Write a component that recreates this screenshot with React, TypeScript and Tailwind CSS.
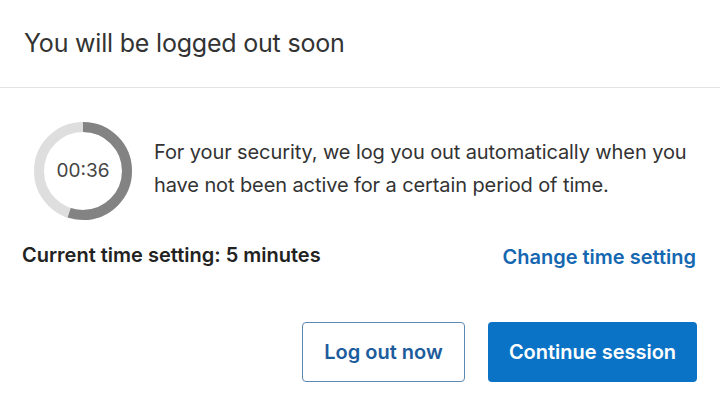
import React from "react";

const FONT = { fontFamily: "Inter, 'Noto Sans', sans-serif" };

function Countdown({ label, fraction }: { label: string; fraction: number }) {
  const r = 44;
  const c = 2 * Math.PI * r;
  return (
    <div className="relative w-[98px] h-[98px] shrink-0">
      <svg width="98" height="98" viewBox="0 0 98 98" className="-rotate-90">
        <circle cx="49" cy="49" r={r} fill="none" stroke="#dedede" strokeWidth="10" />
        <circle
          cx="49"
          cy="49"
          r={r}
          fill="none"
          stroke="#838383"
          strokeWidth="10"
          strokeDasharray={`${c * fraction} ${c}`}
        />
      </svg>
      <div className="absolute inset-0 flex items-center justify-center text-[19px] text-[#444]">{label}</div>
    </div>
  );
}

export default function App() {
  return (
    <div className="w-[720px] h-[406px] bg-white overflow-hidden" style={FONT}>
      <div className="h-[88px] border-b border-[#e3e3e3] flex items-center px-6">
        <h1 className="text-[25px] text-[#333] tracking-[-0.2px]">You will be logged out soon</h1>
      </div>

      <div className="px-[22px] pt-[34px]">
        <div className="flex items-center gap-[22px] pl-3">
          <Countdown label="00:36" fraction={0.55} />
          <p className="text-[20px] leading-[33px] text-[#333] -mt-1 tracking-[-0.1px]">
            For your security, we log you out automatically when you
            <br />
            have not been active for a certain period of time.
          </p>
        </div>

        <div className="flex items-center justify-between mt-[18px] pr-[2px]">
          <span className="text-[20px] font-semibold text-[#222]">Current time setting: 5 minutes</span>
          <a className="text-[20px] font-semibold text-[#1467b0] mt-1">Change time setting</a>
        </div>

        <div className="flex justify-end gap-[23px] mt-[50px] pr-[1px]">
          <button className="w-[163px] h-[60px] rounded-[4px] border border-[#5d88b5] text-[20px] font-semibold text-[#1d5c9c]">
            Log out now
          </button>
          <button className="w-[209px] h-[60px] rounded-[4px] bg-[#0a73c6] text-[20px] font-semibold text-white">
            Continue session
          </button>
        </div>
      </div>
    </div>
  );
}
